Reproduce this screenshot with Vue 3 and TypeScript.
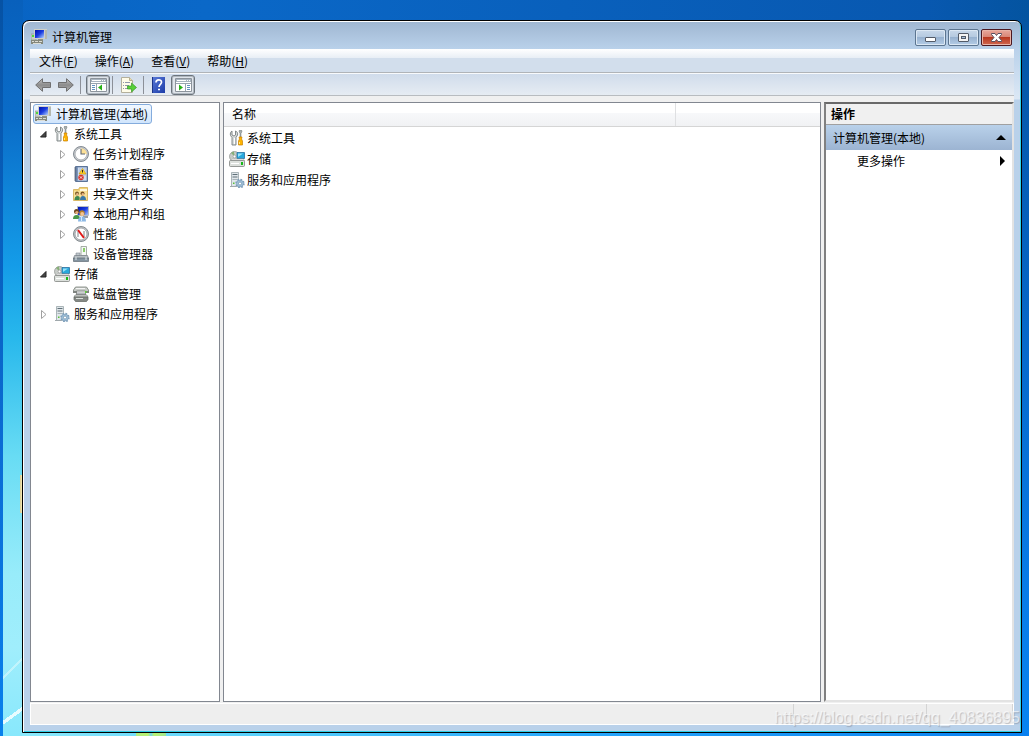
<script setup lang="ts">
import { ref } from 'vue'

interface Menu { label: string; key: string }
interface Node { label: string; icon: string; level: number; state: 'open' | 'closed' | 'leaf' }

const menus: Menu[] = [
  { label: '文件', key: 'F' },
  { label: '操作', key: 'A' },
  { label: '查看', key: 'V' },
  { label: '帮助', key: 'H' },
]
const nodes: Node[] = [
  { label: '计算机管理(本地)', icon: 'computer', level: 0, state: 'leaf' },
  { label: '系统工具', icon: 'tools', level: 1, state: 'open' },
  { label: '任务计划程序', icon: 'clock', level: 2, state: 'closed' },
  { label: '事件查看器', icon: 'events', level: 2, state: 'closed' },
  { label: '共享文件夹', icon: 'shared', level: 2, state: 'closed' },
  { label: '本地用户和组', icon: 'users', level: 2, state: 'closed' },
  { label: '性能', icon: 'perf', level: 2, state: 'closed' },
  { label: '设备管理器', icon: 'device', level: 2, state: 'leaf' },
  { label: '存储', icon: 'storage', level: 1, state: 'open' },
  { label: '磁盘管理', icon: 'disk', level: 2, state: 'leaf' },
  { label: '服务和应用程序', icon: 'services', level: 1, state: 'closed' },
]
const items = [
  { label: '系统工具', icon: 'tools' },
  { label: '存储', icon: 'storage' },
  { label: '服务和应用程序', icon: 'services' },
]
const selected = ref(0)
</script>

<template>
  <div class="desktop">
    <svg class="defs" aria-hidden="true">
      <defs>
        <linearGradient id="g-screen" x1="0" y1="0" x2="1" y2="1">
          <stop offset="0" stop-color="#0010a8" /><stop offset=".5" stop-color="#1a3ce0" /><stop offset="1" stop-color="#b4d4ff" />
        </linearGradient>
        <linearGradient id="g-metal" x1="0" y1="0" x2="0" y2="1">
          <stop offset="0" stop-color="#f4f4f4" /><stop offset="1" stop-color="#8e9398" />
        </linearGradient>
        <linearGradient id="g-arrow" x1="0" y1="0" x2="0" y2="1">
          <stop offset="0" stop-color="#c4c4c4" /><stop offset=".5" stop-color="#8c8c8c" /><stop offset="1" stop-color="#b4b4b4" />
        </linearGradient>
        <linearGradient id="g-help" x1="0" y1="0" x2="1" y2="1">
          <stop offset="0" stop-color="#5a7ad8" /><stop offset="1" stop-color="#1c3ca8" />
        </linearGradient>
      </defs>
      <symbol id="computer" viewBox="0 0 16 16">
        <path d="M0 5h5v6H0z" fill="#c8ccc4" stroke="#8c9088" stroke-width=".6" />
        <path d="M1 6h2v2H1z" fill="#50d840" />
        <path d="M3 0h13v10H3z" fill="#d0d0c8" />
        <path d="M4 1h9v8H4z" fill="url(#g-screen)" />
        <path d="M14 1h2v9h-2z" fill="#b4b8b0" />
        <path d="M7 10h5v1H7z" fill="#8c9088" />
        <path d="M0 11h12v4H0z" fill="#84887c" />
        <path d="M1 12h2v1H1zM4 12h3v1H4zM8 12h3v1H8zM2 14h8v1H2z" fill="#dcdcd4" />
      </symbol>
      <symbol id="tools" viewBox="0 0 16 16">
        <path d="M3 1v4l2 1 1.500-1V1c2 .8 2.500 2.500 2 4L7 7.500V15H3V7.500L1.500 5.500C1 3.500 1.500 2 3 1z" fill="#d8dcdc" stroke="#788080" stroke-width=".9" />
        <path d="M5.500 8v6" stroke="#fff" />
        <path d="M10.500 0h2l.5 2-1 1v5h-1V3l-1-1z" fill="#a8b0b0" stroke="#707878" stroke-width=".5" />
        <path d="M10 7h3l-.5 2 1 2v4h-4v-4l1-2z" fill="#ffb400" stroke="#c88000" stroke-width=".7" />
        <path d="M10.500 12v2" stroke="#ffe880" />
      </symbol>
      <symbol id="clock" viewBox="0 0 16 16">
        <circle cx="8" cy="8" r="7.500" fill="#c4c8cc" stroke="#788088" stroke-width=".9" />
        <circle cx="8" cy="8" r="5.800" fill="#fff" stroke="#989ca0" stroke-width=".5" />
        <path d="M8 8V2.200A5.800 5.800 0 0 1 13.800 8z" fill="#fce098" />
        <path d="M8 3v5h4" fill="none" stroke="#606874" stroke-width="1.100" />
      </symbol>
      <symbol id="events" viewBox="0 0 16 16">
        <path d="M2.500.5h12v15h-12z" fill="#7c98c0" stroke="#5c7498" />
        <path d="M5 1.500h8.500v13H5z" fill="#d0dcec" />
        <path d="M6 3h7M6 5h7M6 7h7M6 9h7" stroke="#98b0d0" stroke-width=".6" />
        <path d="M1 2h3M1 4h3M1 6h3M1 8h3M1 10h3M1 12h3M1 14h3" stroke="#586478" stroke-width=".8" />
        <path d="M9.500 2.500L13 8H6z" fill="#ffd428" stroke="#d09400" stroke-width=".6" /><path d="M9.500 4v2.500" stroke="#282828" />
        <circle cx="8" cy="11.500" r="2.700" fill="#d83028" /><path d="M6.800 10.300l2.400 2.400m0-2.400l-2.400 2.400" stroke="#fff" stroke-width=".8" />
      </symbol>
      <symbol id="shared" viewBox="0 0 16 16">
        <path d="M.5 3.500h5l1-2h8v13H.5z" fill="#f4d478" stroke="#d0ac50" stroke-width=".8" />
        <path d="M7 3h7v2H7z" fill="#fff8dc" /><path d="M1 5h13v8H1z" fill="#f8e098" />
        <circle cx="4" cy="7.500" r="2" fill="#806028" /><circle cx="9.500" cy="7.500" r="2" fill="#785020" />
        <circle cx="4.300" cy="8.300" r="1.200" fill="#e8b888" /><circle cx="9.800" cy="8.300" r="1.200" fill="#e8b888" />
        <path d="M1.500 14q0-4 3-4t2 4z" fill="#408850" /><path d="M7 14q0-4 3-4t3 4z" fill="#3878a8" />
      </symbol>
      <symbol id="users" viewBox="0 0 16 16">
        <path d="M4.500.5h11v9h-11z" fill="url(#g-screen)" stroke="#b8bcc4" />
        <path d="M10 10h5v2h-5z" fill="#989ca4" />
        <circle cx="3.500" cy="5.500" r="2.500" fill="#704820" /><circle cx="3.800" cy="6.500" r="1.600" fill="#e8b07c" />
        <path d="M0 13q0-4 3.500-4t3.500 4z" fill="#489848" />
        <circle cx="9" cy="7" r="2.700" fill="#b88028" /><circle cx="9.200" cy="8" r="1.900" fill="#f4c494" />
        <path d="M5 15.500q0-5 4-5t4 5z" fill="#8cb8e4" /><path d="M8.500 11v4" stroke="#d8ecff" />
      </symbol>
      <symbol id="perf" viewBox="0 0 16 16">
        <circle cx="8" cy="8" r="7.500" fill="#c0c4c8" stroke="#788084" stroke-width=".9" />
        <circle cx="8" cy="8" r="5.900" fill="#fff" stroke="#888c90" stroke-width=".6" />
        <path d="M5 11V5M11 11V5" fill="none" stroke="#707478" stroke-width=".9" />
        <path d="M5 4l6 8" stroke="#e01818" stroke-width="2" />
      </symbol>
      <symbol id="device" viewBox="0 0 16 16">
        <path d="M8 .5h5.500v9H8z" fill="#f4f8f4" stroke="#909890" stroke-width=".8" /><path d="M10 2h2v4h-2z" fill="#88cc68" />
        <path d="M3 7h4v3H3z" fill="#c0c8cc" stroke="#808890" stroke-width=".6" />
        <path d="M1.500 9.500h13l1 3H.5z" fill="#b8c0c4" stroke="#788088" stroke-width=".7" />
        <path d="M.5 12h15v3.500H.5z" fill="#8494a0" stroke="#606c74" stroke-width=".7" /><path d="M3 11v3M13 11v3" stroke="#e0e8ec" />
      </symbol>
      <symbol id="storage" viewBox="0 0 16 16">
        <circle cx="5.500" cy="5.500" r="5" fill="#c8ccc8" stroke="#8c908c" stroke-width=".7" />
        <path d="M5.500 5.500L2 2a5 5 0 0 1 3-1.500z" fill="#88b078" /><circle cx="5.500" cy="5.500" r="1.400" fill="#fff" stroke="#888" stroke-width=".6" />
        <path d="M8 1.500h7.500v6H8z" fill="#28a8dc" stroke="#2870a0" stroke-width=".8" /><path d="M9 2.500h5L9 6z" fill="#98e0f8" />
        <path d="M1.500 9l2-1h10l2 1v1h-14z" fill="#f0f0f0" stroke="#a0a0a0" stroke-width=".5" />
        <rect x=".5" y="9.500" width="15" height="6" rx="1" fill="#dce0dc" stroke="#808480" stroke-width=".8" />
        <path d="M2 12.500h8" stroke="#fff" /><path d="M12 11h2v3h-2z" fill="#18b818" />
      </symbol>
      <symbol id="disk" viewBox="0 0 16 16">
        <path d="M2.500 1h11l2 3v2H.5V4z" fill="#c8ccc8" stroke="#788078" stroke-width=".8" />
        <path d="M0 5h16v2H0z" fill="#808480" /><path d="M3 2.500h9" stroke="#f4f4f4" />
        <path d="M3.500 5h9v4h-9z" fill="url(#g-metal)" stroke="#707470" stroke-width=".7" />
        <path d="M2 9h12l1 2H1z" fill="#d4d8d4" stroke="#808480" stroke-width=".6" />
        <path d="M1 11h14v2.500l-1.500 2h-11L1 13.500z" fill="#848884" stroke="#606460" stroke-width=".7" />
        <path d="M3 12.500h7" stroke="#dce0dc" /><path d="M12 5h1.500v2H12z" fill="#60d038" />
      </symbol>
      <symbol id="services" viewBox="0 0 16 16">
        <path d="M2.500.5h7v14h-7z" fill="#e0e6ea" stroke="#98a4a8" stroke-width=".8" />
        <path d="M3.500 2.500h5M3.500 5h5" stroke="#607078" stroke-width="1.200" /><path d="M3.500 7.500h5" stroke="#a8b4b8" />
        <path d="M1 14.500h6" stroke="#a0a8ac" /><path d="M4 10.500h1.500V12H4z" fill="#58c038" />
        <circle cx="11" cy="11.500" r="3.700" fill="#a8c8e0" stroke="#7c9cb8" stroke-width="2" stroke-dasharray="1.600 1.300" />
        <circle cx="11" cy="11.500" r="3.300" fill="#a4c4dc" stroke="#7c9cb8" stroke-width=".6" /><circle cx="11" cy="11.500" r="1.500" fill="#fff" stroke="#5880a0" stroke-width=".6" />
      </symbol>
    </svg>

    <main class="window">
      <header class="titlebar">
        <svg class="icon"><use href="#computer" /></svg>
        <h1>计算机管理</h1>
        <div class="captions">
          <button class="cap" type="button" aria-label="最小化">
            <svg width="29" height="15" viewBox="0 0 29 15"><rect x="9.500" y="7.500" width="10" height="4" rx=".5" fill="#fff" stroke="#535b68" /></svg>
          </button>
          <button class="cap" type="button" aria-label="最大化">
            <svg width="29" height="15" viewBox="0 0 29 15"><rect x="9.500" y="3.500" width="10" height="8" rx=".5" fill="#f4f4f4" stroke="#535b68" /><rect x="12.500" y="6.500" width="4" height="2" fill="#a8c0dc" stroke="#535b68" /></svg>
          </button>
          <button class="cap close" type="button" aria-label="关闭">
            <svg width="29" height="15" viewBox="0 0 29 15"><path d="M9.500 3.500h3.500l1.500 2 1.500-2h3.500v1l-2.500 3 2.500 3v1H16l-1.500-2-1.500 2H9.500v-1l2.500-3-2.500-3z" fill="#fff" stroke="#585060" /></svg>
          </button>
        </div>
      </header>

      <div class="client">
        <nav class="menubar">
          <button v-for="m in menus" :key="m.key" type="button">{{ m.label }}(<u>{{ m.key }}</u>)</button>
        </nav>

        <div class="toolbar" role="toolbar">
          <button type="button" class="tool arrow" aria-label="后退">
            <svg width="16" height="14" viewBox="0 0 16 14"><path d="M.7 7L7.500.7v3.800h8v5h-8v3.800z" fill="url(#g-arrow)" stroke="#707070" /></svg>
          </button>
          <button type="button" class="tool arrow" aria-label="前进">
            <svg width="16" height="14" viewBox="0 0 16 14"><path d="M15.300 7L8.500.7v3.800h-8v5h8v3.800z" fill="url(#g-arrow)" stroke="#707070" /></svg>
          </button>
          <i class="sep"></i>
          <button type="button" class="tool pressed" aria-label="显示/隐藏控制台树">
            <svg width="17" height="14" viewBox="0 0 17 14"><path d="M.5.5h16v13H.5z" fill="#fff" stroke="#8c949c" /><path d="M1 1h15v3H1z" fill="#a8b4c0" /><path d="M2 2.500h9M12 2.500h1M14 2.500h1" stroke="#fff" /><path d="M1 5.500h15M6.500 5v8" stroke="#98a4b0" /><path d="M2 7.500h3M2 9.500h3M2 11.500h3" stroke="#6090c0" /><path d="M12 6.500v6L8 9.500z" fill="#28b018" /></svg>
          </button>
          <i class="sep"></i>
          <button type="button" class="tool export" aria-label="导出列表">
            <svg width="16" height="16" viewBox="0 0 16 16"><path d="M.5.5h8l3 3v12H.5z" fill="#fffce8" stroke="#b4b09c" /><path d="M8.500.5v3h3" fill="#e8dcb0" stroke="#b8b090" /><path d="M2 5.500h1M4 5.500h5M2 8.500h1M4 8.500h4M2 11.500h1M4 11.500h4" stroke="#9098ac" /><path d="M6.500 9h4V6l5 4.500-5 4.500v-3h-4z" fill="#58d038" stroke="#389828" stroke-width=".7" /></svg>
          </button>
          <i class="sep"></i>
          <button type="button" class="tool help" aria-label="帮助">
            <svg width="13" height="16" viewBox="0 0 13 16"><path d="M0 0h13v16H0z" fill="url(#g-help)" /><path d="M.5 0v16" stroke="#1c3488" /><path d="M4 5.500c0-3.500 5.500-3.500 5.500-.3 0 2-2.500 2.300-2.500 4.800M6 12.500h2" fill="none" stroke="#fff" stroke-width="1.700" /></svg>
          </button>
          <button type="button" class="tool pressed" aria-label="显示/隐藏操作窗格">
            <svg width="17" height="14" viewBox="0 0 17 14"><path d="M.5.5h16v13H.5z" fill="#fff" stroke="#8c949c" /><path d="M1 1h15v3H1z" fill="#a8b4c0" /><path d="M2 2.500h9M12 2.500h1M14 2.500h1" stroke="#fff" /><path d="M1 5.500h15M10.500 5v8" stroke="#98a4b0" /><path d="M12 7.500h3M12 9.500h3M12 11.500h3" stroke="#6090c0" /><path d="M4 6.500v6l4-3z" fill="#28b018" /></svg>
          </button>
        </div>

        <div class="panes">
          <ul class="pane tree" role="tree">
            <li v-for="(n, i) in nodes" :key="n.label" role="treeitem" :class="'level' + n.level" :aria-selected="i === selected">
              <span v-if="n.level" class="twist">
                <svg v-if="n.state === 'open'" width="9" height="8" viewBox="0 0 9 8"><path d="M7 1.500V7H1.500z" fill="#484848" stroke="#202020" /></svg>
                <svg v-else-if="n.state === 'closed'" width="9" height="9" viewBox="0 0 9 9"><path d="M2.500.5v8l4.500-4z" fill="#fff" stroke="#a0a0a0" /></svg>
              </span>
              <button type="button" :class="{ selected: i === selected }" @click="selected = i">
                <svg class="icon"><use :href="'#' + n.icon" /></svg>{{ n.label }}
              </button>
            </li>
          </ul>

          <section class="pane list">
            <table>
              <thead><tr><th scope="col">名称</th><td></td></tr></thead>
              <tbody>
                <tr v-for="it in items" :key="it.label">
                  <td colspan="2"><div class="item"><svg class="icon"><use :href="'#' + it.icon" /></svg>{{ it.label }}</div></td>
                </tr>
              </tbody>
            </table>
          </section>

          <aside class="actions">
            <h2>操作</h2>
            <button type="button" class="group">计算机管理(本地)<svg width="10" height="5" viewBox="0 0 10 5"><path d="M0 5l5-5 5 5z" /></svg></button>
            <button type="button" class="more">更多操作<svg width="5" height="10" viewBox="0 0 5 10"><path d="M0 0l5 5-5 5z" /></svg></button>
          </aside>
        </div>

        <footer class="status"><span></span><span class="mid"></span><span class="end"></span></footer>
      </div>
      <div class="watermark">https://blog.csdn.net/qq_40836895</div>
    </main>
  </div>
</template>

<style>
body { margin: 0; }
</style>

<style scoped>
* { box-sizing: border-box; }
.desktop {
  min-height: 100vh;
  padding: 20px 7px 3px 22px;
  display: flex;
  font: 12px/20px Tahoma, "Noto Sans CJK SC", sans-serif;
  color: #000;
  background:
    linear-gradient(#0652a4, #0a6cd4 60%, #0880ec) left / 3px 100% no-repeat,
    linear-gradient(90deg, #d8c890, #f8f0b8) 20px 68% / 2px 38px no-repeat,
    linear-gradient(144deg, transparent 49%, #e8fcff 49%, #e8fcff 56%, transparent 56%) 3px 100% / 20px 44px no-repeat,
    linear-gradient(135deg, transparent 50%, #c0f4fc 50%, #c0f4fc 54%, transparent 54%) 3px 93% / 20px 40px no-repeat,
    linear-gradient(#0860bc, #0a6cc8 16%, #149ce8 36%, #28b8ec 46%, #68dcf4 62%, #98ecfa 78%, #a0eefc 88%, #88e8fc) 3px 0 / 20px 100% no-repeat,
    linear-gradient(90deg, #b0ec80, #b8f070 40%, #70d8e8 50%, #b8f070 60%, #a0e890) 136px 100% / 30px 4px no-repeat,
    linear-gradient(90deg, #90ecfc, #58d0fc 25%, #28a8fc 55%, #0880f0) bottom / 100% 4px no-repeat,
    linear-gradient(90deg, #0864c4, #0a68c8 20%, #0858b0 90%, #0454a0) top / 100% 22px no-repeat,
    linear-gradient(#0454a0, #0560bc 30%, #087ce8 80%, #0884f0);
}
.defs { width: 0; height: 0; position: absolute; }
.window {
  position: relative;
  flex: 1;
  min-width: 0;
  display: flex;
  flex-direction: column;
  padding: 0 7px 7px;
  border: 1px solid #000;
  border-radius: 7px 7px 0 0;
  background: linear-gradient(#9fb6d1, #b9d1ea 28px, #dce8f5 78px, #b9d1ea 79px);
  box-shadow: inset 1px 1px 0 #fff, inset -1px -1px 0 #30d0e8;
}
button { font: inherit; color: inherit; border: 0; padding: 0; margin: 0; background: none; }
svg { display: block; flex: none; }
.icon { width: 16px; height: 16px; }
.titlebar { height: 28px; display: flex; align-items: center; padding: 4px 2px 0 1px; gap: 5px; }
h1 { flex: 1; margin: 0; font-size: 12px; font-weight: 400; }
.captions { display: flex; gap: 2px; }
.cap {
  width: 31px; height: 17px; border: 1px solid #5c7590; border-radius: 2px;
  background: linear-gradient(#c8d8ea, #b4c9e0 48%, #98b2d0 50%, #b4cce6);
  box-shadow: inset 0 0 0 1px #dce8f4;
}
.close { border-color: #4c1820; background: linear-gradient(#e8a89c, #d88474 48%, #b83820 50%, #d06850); box-shadow: inset 0 0 0 1px #e8b4a8; }
.client { flex: 1; display: flex; flex-direction: column; background: #f0f0f0; }
.menubar {
  height: 24px; display: flex; gap: 17px; padding: 0 9px; border-bottom: 1px solid #b0b4b8;
  background: linear-gradient(#fff, #e8eef5 9px, #d2deec 9px, #d2deec);
}
.menubar button { line-height: 23px; }
.toolbar {
  height: 23px; display: flex; align-items: center; padding: 0 4px;
  border-top: 1px solid #f8fafc; border-bottom: 1px solid #b8bcc0;
  background: linear-gradient(#d0dceb, #e6ecf3);
}
.tool { height: 20px; display: grid; place-items: center; }
.arrow { width: 18px; }
.arrow + .arrow { margin-left: 5px; }
.sep { width: 1px; height: 18px; background: #8c9098; margin: 0 5px; }
.pressed { width: 24px; border: 1px solid #6c747c; border-radius: 3px; background: #dfe4ea; box-shadow: inset 0 0 0 1px #b0b8c0; }
.pressed + .sep { margin: 0 8px 0 2px; }
.export + .sep { margin: 0 8px 0 6px; }
.help + .pressed { margin-left: 6px; }
.panes { flex: 1; display: flex; padding-top: 6px; }
.pane { border: 1px solid #828790; background: #fff; }
.tree { width: 190px; margin: 0 3px 0 0; padding: 1px 2px; list-style: none; }
.tree li { height: 20px; display: flex; align-items: center; white-space: nowrap; }
.level1 { padding-left: 6px; }
.level2 { padding-left: 25px; }
.twist { width: 14px; display: flex; }
.tree button { height: 20px; display: flex; align-items: center; gap: 4px; padding: 0 1px; }
.level0 button { gap: 5px; padding: 0 3px 0 1px; border: 1px solid transparent; }
.tree button.selected { border: 1px solid #84acdd; border-radius: 3px; background: linear-gradient(#f2f8ff, #d0e5fc); }
.list { flex: 1; min-width: 0; }
table { width: 100%; border-collapse: collapse; table-layout: fixed; }
thead tr { height: 23px; background: linear-gradient(#fff, #fff 10px, #f7f8fa 10px, #f1f2f4); }
th, td { padding: 0; font-weight: 400; text-align: left; }
th { width: 451px; padding-left: 8px; border-right: 1px solid #dfe0e2; }
thead th, thead td { border-bottom: 1px solid #d5d5d5; }
.item { height: 21px; display: flex; align-items: center; gap: 2px; padding-left: 5px; }
tbody::before { content: ""; display: block; height: 1px; }
.actions {
  width: 190px; margin-left: 3px; background: #fff;
  border: 2px solid; border-color: #696969 #e3e3e3 #e3e3e3 #808080;
  display: flex; flex-direction: column;
}
h2 { margin: 0; height: 21px; padding-left: 5px; font-size: 12px; font-weight: 700; background: #f0f0f0; border-bottom: 1px solid #a0a0a0; }
.actions button { display: flex; align-items: center; justify-content: space-between; }
.group { height: 25px; padding: 0 6px 0 7px; background: linear-gradient(#b9d1ea, #9cb4d2); }
.more { height: 22px; padding: 0 7px 0 31px; }
.status { height: 22px; margin-top: 1px; display: flex; border: 1px solid #fff; background: #eee; }
.status span { flex: 1; border-right: 1px solid #d4d4d4; height: 14px; }
.status .mid { flex: 0 0 133px; }
.status .end { flex: 0 0 86px; }
.watermark {
  position: absolute; right: 1px; bottom: 4px;
  font: 16px/20px "Liberation Sans", Arial, sans-serif;
  color: rgba(255, 255, 255, .6); text-shadow: 1px 1px 1px rgba(100, 100, 110, .35);
}
</style>
